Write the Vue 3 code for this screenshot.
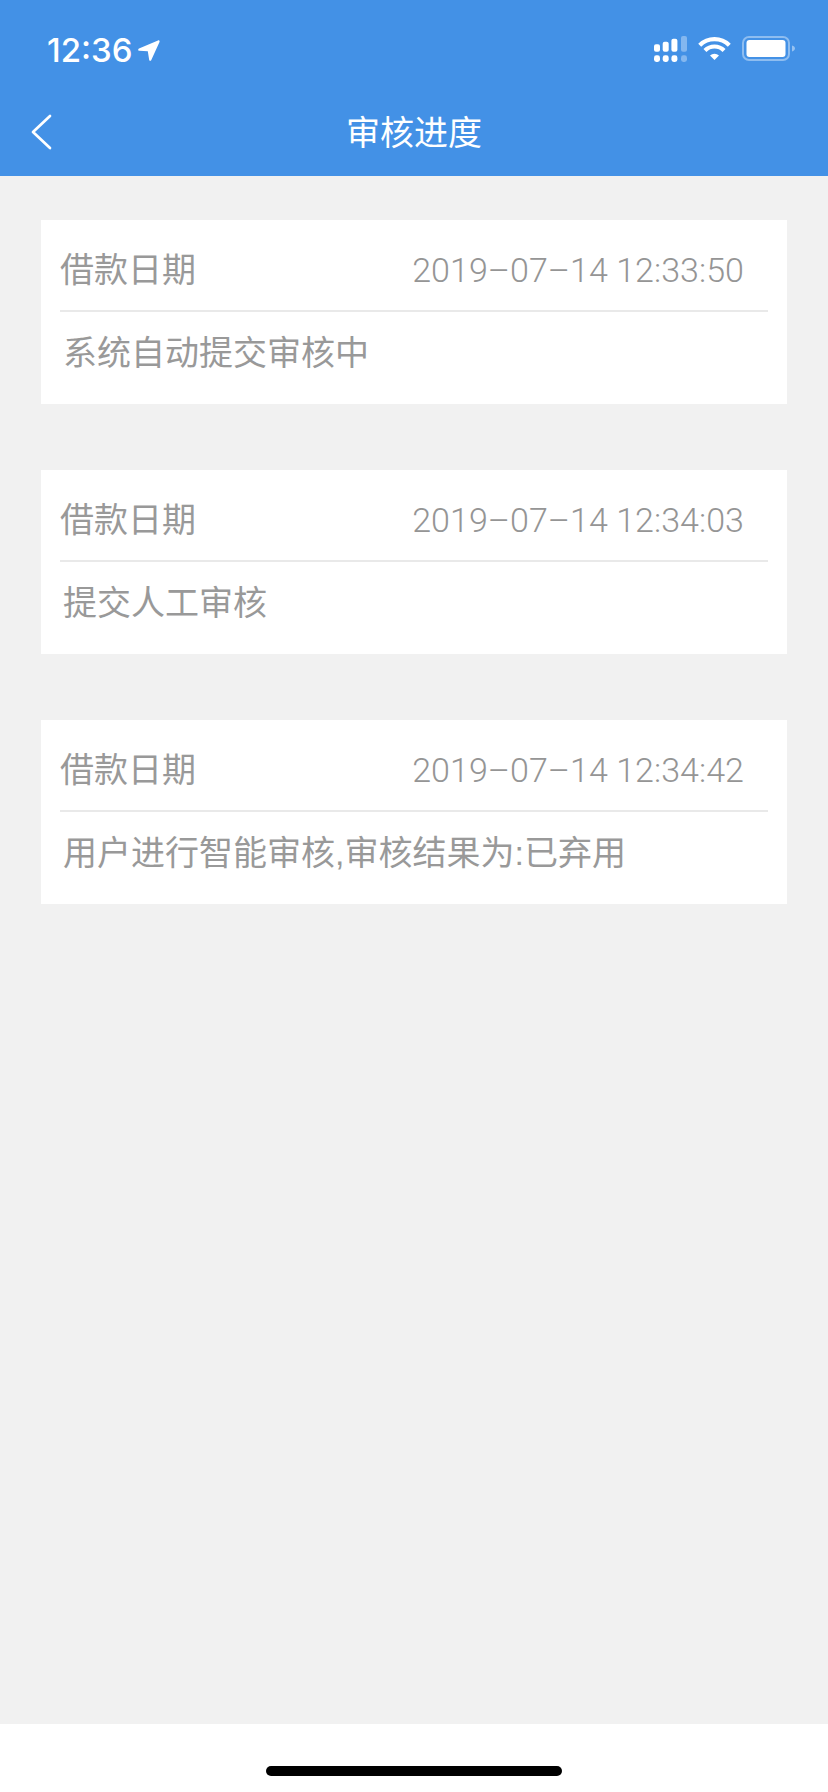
<script setup>
const records = [
  { time: '2019–07–14 12:33:50', text: '系统自动提交审核中' },
  { time: '2019–07–14 12:34:03', text: '提交人工审核' },
  { time: '2019–07–14 12:34:42', text: '用户进行智能审核,审核结果为:已弃用' }
]
</script>

<template>
  <div class="page">
    <header class="head">
      <div class="status">
        <div class="clock">
          <span class="time">12:36</span>
          <svg class="loc" viewBox="0 0 22 21" width="22" height="21"><path d="M1 8.600 20 0.400c1-0.400 1.900 0.500 1.500 1.500L13.200 20.200c-0.400 1-1.800 0.800-2-0.200L9.800 11.200 1.300 10.800C0 10.700-0.200 9.100 1 8.600Z" fill="#fff"/></svg>
        </div>
        <div class="icons">
          <svg viewBox="0 0 33 26" width="33" height="26">
            <g fill="#fff">
              <rect x="0" y="8.300" width="6" height="7.400" rx="2"/>
              <rect x="8.700" y="5.700" width="6" height="10" rx="2"/>
              <rect x="17.400" y="2.700" width="6" height="13" rx="2"/>
              <rect x="0" y="19.300" width="6" height="6.700" rx="2.400"/>
              <rect x="8.700" y="19.300" width="6" height="6.700" rx="2.400"/>
              <rect x="17.400" y="19.300" width="6" height="6.700" rx="2.400"/>
            </g>
            <g fill="#fff" fill-opacity=".35">
              <rect x="27" y="0" width="6" height="15.700" rx="2"/>
              <rect x="27" y="19.300" width="6" height="6.700" rx="2.400"/>
            </g>
          </svg>
          <svg viewBox="0 0 33 25" width="33" height="25">
            <g fill="none" stroke="#fff" stroke-width="4.200">
              <path d="M1.700 9.200A21 21 0 0 1 31.300 9.200"/>
              <path d="M6.950 14.450A13.500 13.500 0 0 1 26.050 14.450"/>
            </g>
            <path d="M16.500 24 12 19.500A6.400 6.400 0 0 1 21 19.500Z" fill="#fff"/>
          </svg>
          <svg viewBox="0 0 53 25" width="53" height="25">
            <rect x="1" y="1" width="46" height="23" rx="6" fill="none" stroke="#fff" stroke-opacity=".4" stroke-width="2"/>
            <rect x="4.500" y="4" width="39" height="17" rx="3" fill="#fff"/>
            <path d="M50 9.500c1.700.4 3 1.600 3 3s-1.300 2.600-3 3Z" fill="#fff" fill-opacity=".45"/>
          </svg>
        </div>
      </div>
      <div class="nav">
        <svg class="back" viewBox="0 0 22 36" width="22" height="36"><path d="M20 2 3 18 20 34" fill="none" stroke="#fff" stroke-width="2.700" stroke-linecap="round" stroke-linejoin="round"/></svg>
        <h1 class="title">审核进度</h1>
        <span class="nav-side"></span>
      </div>
    </header>

    <main class="list">
      <section v-for="r in records" :key="r.time" class="card">
        <div class="row">
          <span class="label">借款日期</span>
          <span class="stamp">{{ r.time }}</span>
        </div>
        <p class="desc">{{ r.text }}</p>
      </section>
    </main>

    <footer class="home"><span class="bar"></span></footer>
  </div>
</template>

<style scoped>
.page {
  width: 828px;
  height: 1792px;
  display: flex;
  flex-direction: column;
  background: #f1f1f1;
  font-family: "Liberation Sans", "Noto Sans CJK SC", sans-serif;
  overflow: hidden;
}
.head {
  height: 176px;
  background: #4391e6;
  color: #fff;
  display: flex;
  flex-direction: column;
}
.status {
  height: 98px;
  padding: 35px 33px 0 47px;
  box-sizing: border-box;
  display: flex;
  justify-content: space-between;
  align-items: flex-start;
}
.clock {
  display: flex;
  align-items: center;
  gap: 5px;
  height: 30px;
}
.time {
  font-family: Inter, "Liberation Sans", sans-serif;
  font-weight: 500;
  font-size: 33px;
  line-height: 30px;
}
.loc {
  margin-top: 1px;
}
.icons {
  display: flex;
  align-items: flex-start;
  gap: 11px;
  padding-top: 1px;
}
.nav {
  flex: 1;
  display: flex;
  align-items: center;
  justify-content: space-between;
  padding: 0 30px;
}
.back {
  display: block;
  margin-top: -11px;
}
.nav-side {
  width: 22px;
}
.title {
  margin: -12px 0 0;
  font-size: 34px;
  line-height: 44px;
  font-weight: 400;
  font-family: "Noto Sans CJK SC", sans-serif;
}
.list {
  flex: 1;
  display: flex;
  flex-direction: column;
  gap: 66px;
  padding: 44px 41px 0 41px;
}
.card {
  height: 184px;
  background: #fff;
  padding: 0 19px;
  box-sizing: border-box;
  color: #999;
}
.row {
  height: 92px;
  box-sizing: border-box;
  padding: 26px 24px 0 0;
  border-bottom: 2px solid #e9e9e9;
  display: flex;
  justify-content: space-between;
  align-items: flex-start;
  font-size: 34px;
  line-height: 44px;
}
.label {
  font-family: "Noto Sans CJK SC", sans-serif;
}
.stamp {
  font-family: Roboto, "Liberation Sans", sans-serif;
  font-weight: 300;
  letter-spacing: 0.05px;
  color: #959595;
  margin-top: 2px;
}
.desc {
  margin: 0;
  padding: 19px 0 0 3px;
  font-size: 34px;
  line-height: 44px;
  font-family: "Liberation Sans", "Noto Sans CJK SC", sans-serif;
}
.home {
  height: 68px;
  background: #fff;
  display: flex;
  justify-content: center;
  padding-top: 42px;
  box-sizing: border-box;
}
.bar {
  width: 296px;
  height: 10px;
  border-radius: 5px;
  background: #000;
}
</style>
